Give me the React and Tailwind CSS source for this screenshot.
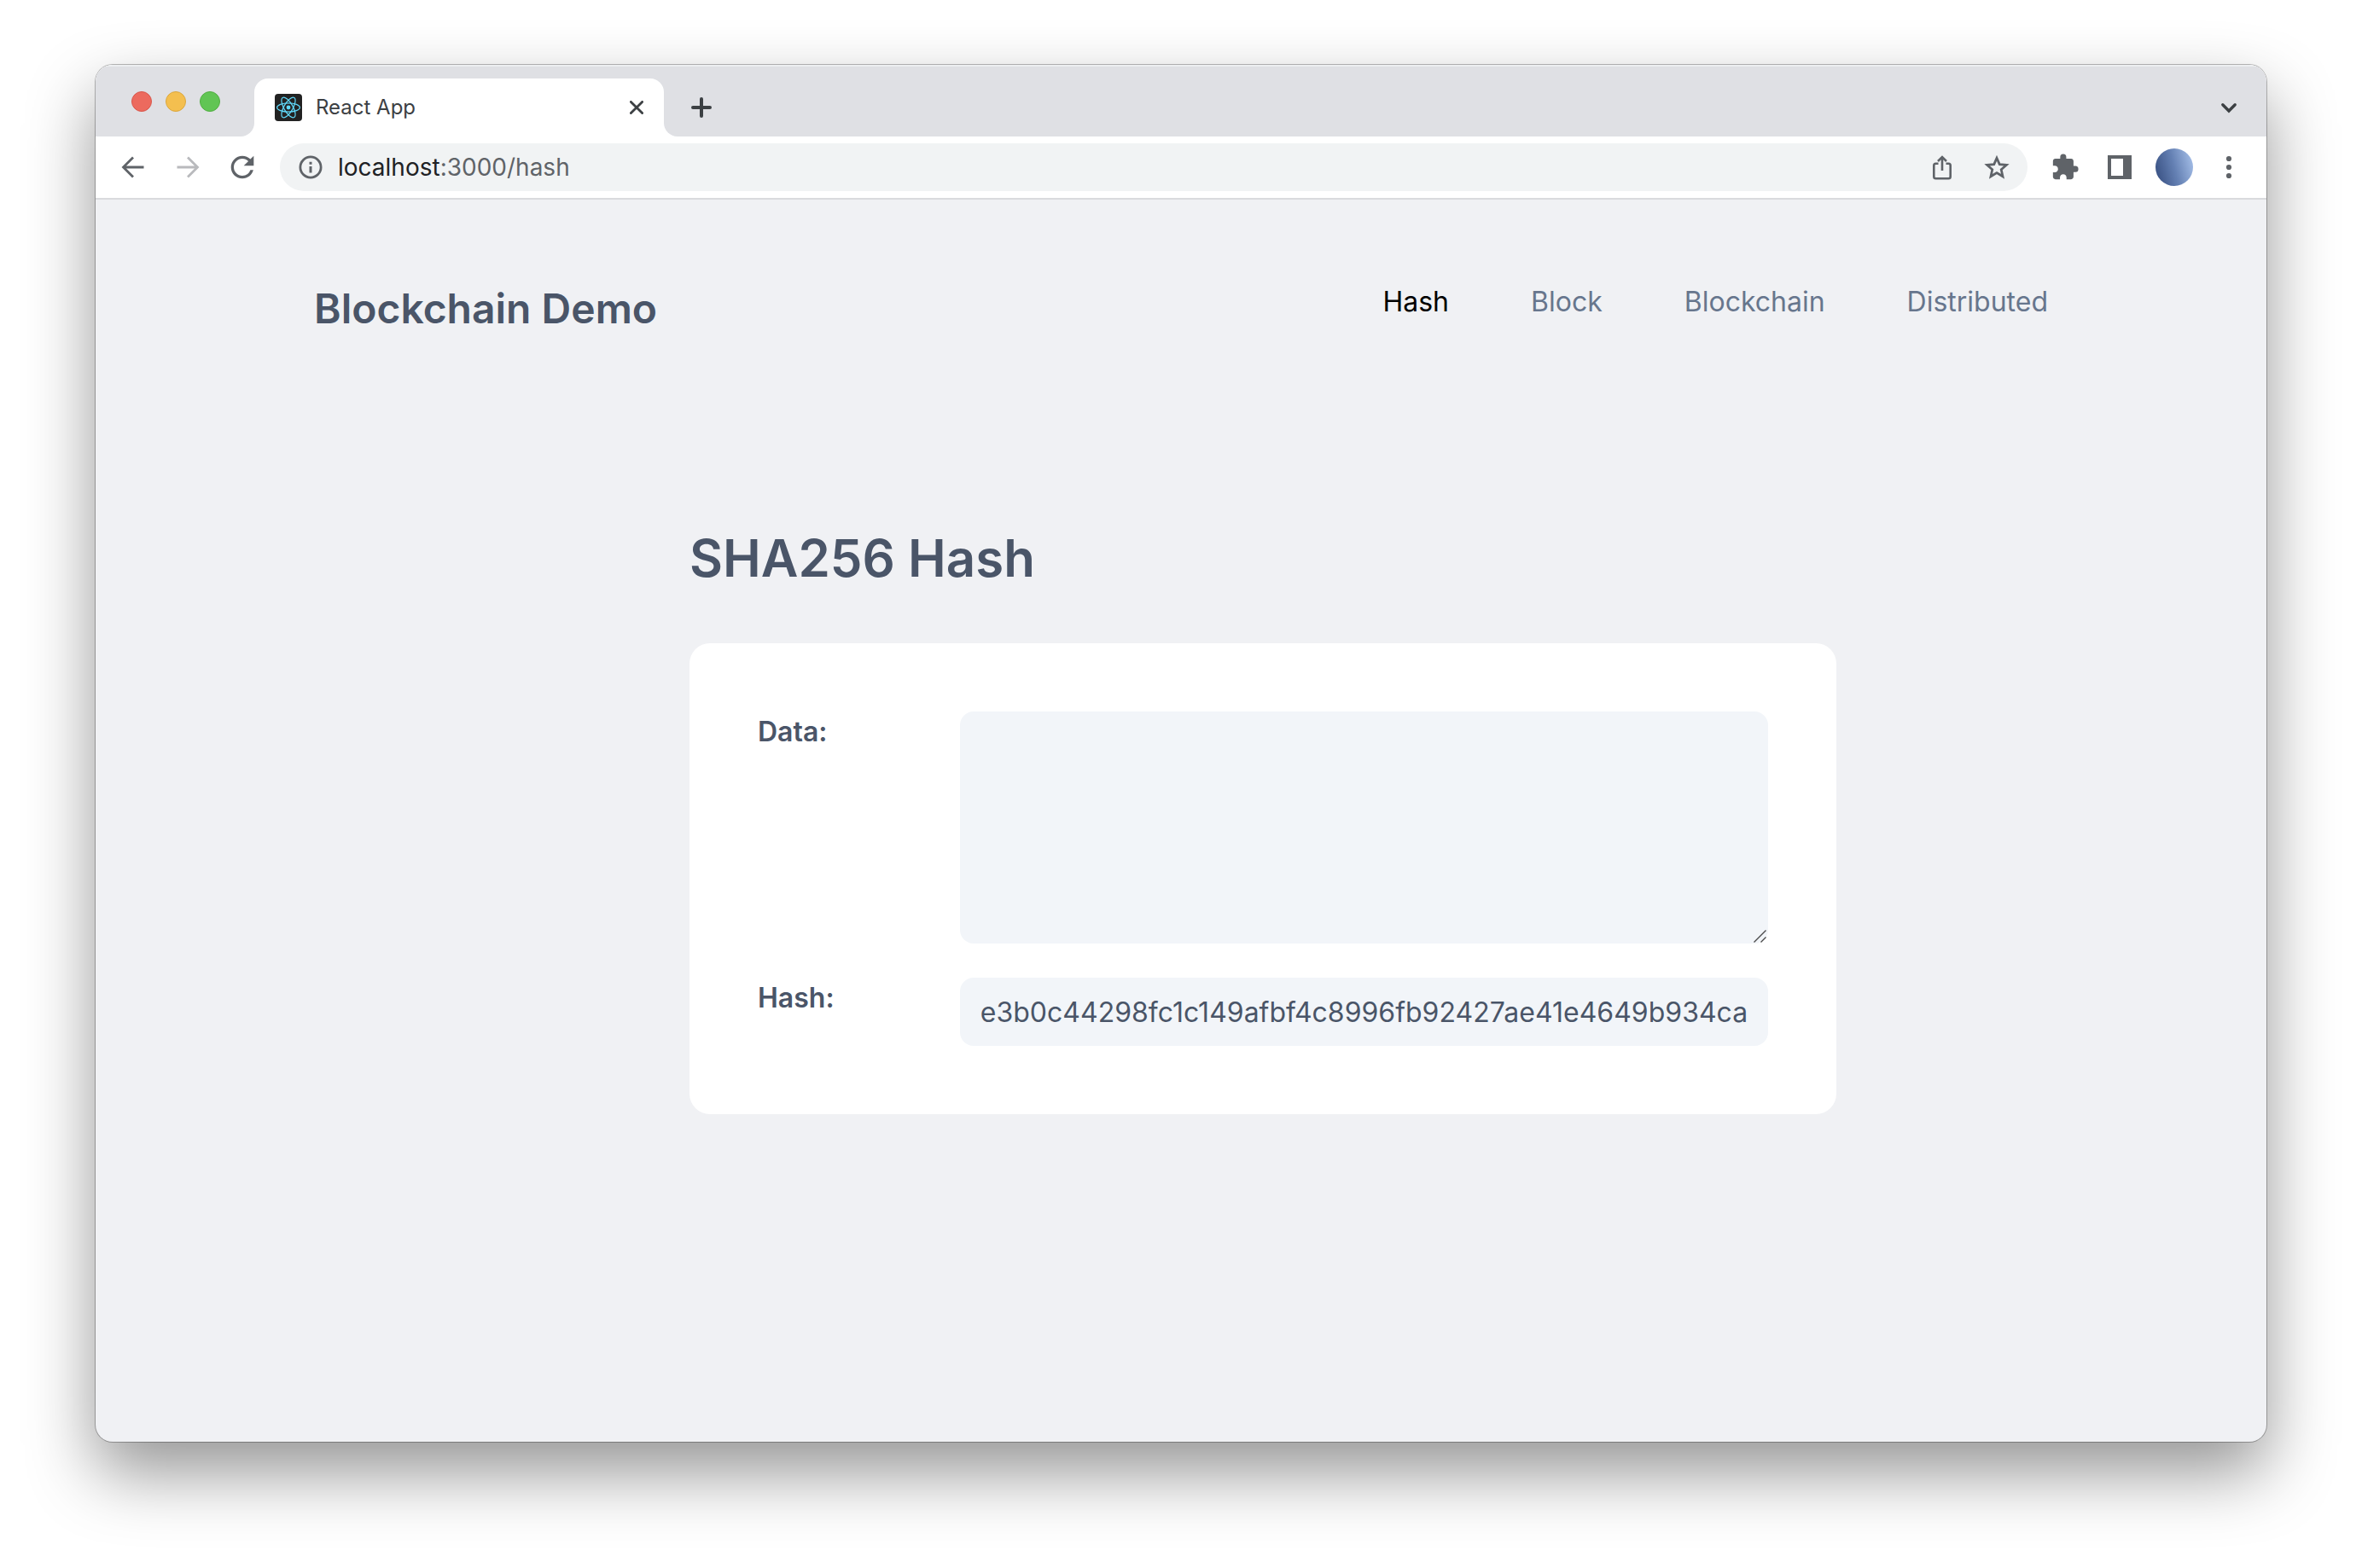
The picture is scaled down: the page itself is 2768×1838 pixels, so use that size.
import React from "react";
import { MdRefresh, MdExtension } from "react-icons/md";

const HASH = "e3b0c44298fc1c149afbf4c8996fb92427ae41e4649b934ca495991b7852b855";

const NAV = [
  { label: "Hash", href: "#hash", active: true },
  { label: "Block", href: "#block" },
  { label: "Blockchain", href: "#blockchain" },
  { label: "Distributed", href: "#distributed" },
];

function ArrowIcon({ className }) {
  return (
    <svg viewBox="-20 -20 40 40" className={className} fill="none" stroke="currentColor" strokeWidth="2.8" aria-hidden="true">
      <path d="M12.5 0H-11.5M0 -11.5L-11.5 0L0 11.5" />
    </svg>
  );
}

function InfoIcon() {
  return (
    <svg viewBox="-16 -16 32 32" className="size-8" fill="none" stroke="currentColor" strokeWidth="2.8" aria-hidden="true">
      <circle r="12.1" />
      <path d="M0 -6.2V-3.2M0 -1V6.4" strokeWidth="3" />
    </svg>
  );
}

function StarIcon() {
  return (
    <svg viewBox="-18 -19 36 36" className="size-10" fill="none" stroke="currentColor" strokeWidth="2.5" aria-hidden="true">
      <path d="M0 -10.7L2.9 -4L10.2 -3.3L4.7 1.5L6.3 8.7L0 4.9L-6.3 8.7L-4.7 1.5L-10.2 -3.3L-2.9 -4Z" />
    </svg>
  );
}

function ShareIcon() {
  return (
    <svg viewBox="-20 -20 40 40" className="size-10" fill="none" stroke="currentColor" strokeWidth="2.6" aria-hidden="true">
      <path d="M-4.5 -4.2H-7.5Q-9.7 -4.2 -9.7 -2V11Q-9.7 13.2 -7.5 13.2H7.5Q9.7 13.2 9.7 11V-2Q9.7 -4.2 7.5 -4.2H4.5" />
      <path d="M0 4V-11.5M-5 -7L0 -12L5 -7" />
    </svg>
  );
}

function SidePanelIcon() {
  return (
    <svg viewBox="0 0 28 28" className="size-7" aria-hidden="true">
      <path fill="currentColor" fillRule="evenodd" d="M0 0H28V28H0ZM4 4V24H18V4Z" />
    </svg>
  );
}

function ReactLogo() {
  return (
    <svg viewBox="-16 -16 32 32" className="size-8 shrink-0" aria-hidden="true">
      <rect x="-16" y="-16" width="32" height="32" rx="4" fill="#222222" />
      <circle r="2.4" fill="#61dafb" />
      <g fill="none" stroke="#61dafb" strokeWidth="1.2">
        <ellipse rx="13.4" ry="5.2" />
        <ellipse rx="13.4" ry="5.2" transform="rotate(60)" />
        <ellipse rx="13.4" ry="5.2" transform="rotate(120)" />
      </g>
    </svg>
  );
}

function IconButton({ label, className = "", children }) {
  return (
    <button type="button" aria-label={label} className={`flex w-16 items-center justify-center ${className}`}>
      {children}
    </button>
  );
}

function TabStrip() {
  return (
    <div className="flex h-[84px] border-t-2 border-[#eceef0] bg-white">
      <div className="flex w-[186px] gap-4 rounded-br-2xl bg-[#dfe0e4] pt-[29px] pl-[42px]">
        <button type="button" aria-label="Close window" className="size-6 rounded-full border border-[#d9574c] bg-[#ec6a5e]" />
        <button type="button" aria-label="Minimize window" className="size-6 rounded-full border border-[#dba73e] bg-[#f4bf4f]" />
        <button type="button" aria-label="Zoom window" className="size-6 rounded-full border border-[#52ad42] bg-[#61c554]" />
      </div>
      <div className="w-[480px] bg-[#dfe0e4] pt-[14px]">
        <div className="flex h-full items-center rounded-t-2xl bg-white pl-6">
          <ReactLogo />
          <span className="flex-1 pl-4 text-2xl text-[#3c4043]">React App</span>
          <button type="button" aria-label="Close tab" className="flex w-16 justify-center text-[#3c4043]">
            <svg viewBox="-8 -8 16 16" className="size-4" fill="none" stroke="currentColor" strokeWidth="2.8" strokeLinecap="round" aria-hidden="true">
              <path d="M-6.6 -6.6L6.6 6.6M6.6 -6.6L-6.6 6.6" />
            </svg>
          </button>
        </div>
      </div>
      <div className="flex flex-1 items-center justify-between rounded-bl-2xl bg-[#dfe0e4] px-3 pt-[14px] text-[#3c4043]">
        <IconButton label="New tab">
          <svg viewBox="-12 -12 24 24" className="size-6" fill="none" stroke="currentColor" strokeWidth="4" strokeLinecap="round" aria-hidden="true">
            <path d="M-10 0H10M0 -10V10" />
          </svg>
        </IconButton>
        <IconButton label="Search tabs">
          <svg viewBox="-12 -12 24 24" className="size-6" fill="none" stroke="currentColor" strokeWidth="3.4" strokeLinecap="round" aria-hidden="true">
            <path d="M-7.2 -3.2L0 4L7.2 -3.2" />
          </svg>
        </IconButton>
      </div>
    </div>
  );
}

function Toolbar() {
  return (
    <div className="flex border-b-2 border-[#d9dadd] bg-white px-3 py-2 text-[#5f6368]">
      <IconButton label="Back">
        <ArrowIcon className="size-10" />
      </IconButton>
      <IconButton label="Forward" className="text-[#b9babd]">
        <ArrowIcon className="size-10 rotate-180" />
      </IconButton>
      <IconButton label="Reload">
        <MdRefresh className="size-10" />
      </IconButton>
      <div className="ml-3 flex h-14 flex-1 items-center rounded-full bg-[#f1f3f4] pr-1 pl-5">
        <InfoIcon />
        <div className="flex-1 pl-4 text-[28px] leading-10 text-[#5f6368]">
          <span className="text-[#202124]">localhost</span>:3000/hash
        </div>
        <IconButton label="Share">
          <ShareIcon />
        </IconButton>
        <IconButton label="Bookmark this page">
          <StarIcon />
        </IconButton>
      </div>
      <div className="ml-3 flex">
        <IconButton label="Extensions">
          <MdExtension className="size-[34px]" />
        </IconButton>
        <IconButton label="Side panel">
          <SidePanelIcon />
        </IconButton>
        <IconButton label="Profile">
          <span className="size-11 rounded-full bg-[linear-gradient(75deg,#3b5385_8%,#6480b3_50%,#a0bae4_92%)]" />
        </IconButton>
        <IconButton label="Menu">
          <svg viewBox="-14 -14 28 28" className="size-7" fill="currentColor" aria-hidden="true">
            <circle cy="-10" r="3.1" />
            <circle r="3.1" />
            <circle cy="10" r="3.1" />
          </svg>
        </IconButton>
      </div>
    </div>
  );
}

function SiteHeader() {
  return (
    <header className="flex items-start justify-between px-64 pt-24">
      <div className="text-5xl leading-[64px] font-semibold">Blockchain Demo</div>
      <nav className="flex gap-24 text-[32px] leading-[48px]">
        {NAV.map((item) => (
          <a key={item.label} href={item.href} className={item.active ? "text-black" : "text-[#67768d]"}>
            {item.label}
          </a>
        ))}
      </nav>
    </header>
  );
}

function HashForm() {
  return (
    <main className="mt-56 pl-48">
      <div className="mx-auto max-w-[1344px]">
        <h1 className="text-6xl leading-[72px] font-semibold">SHA256 Hash</h1>
        <form className="mt-16 flex flex-col gap-10 rounded-3xl bg-white p-20 text-[32px] leading-[48px]">
          <div className="flex items-start">
            <label htmlFor="data" className="w-1/5 font-semibold">
              Data:
            </label>
            <div className="relative flex flex-1">
              <textarea id="data" className="h-[272px] w-full resize-none rounded-2xl bg-[#f2f5f9] px-6 py-4" />
              <svg viewBox="0 0 18 18" className="absolute right-0 bottom-0 size-[18px]" fill="none" stroke="#4a4a4a" strokeWidth="1.4" aria-hidden="true">
                <path d="M1.5 16.5L15.5 2.5M9.5 16.5L15.5 10.5" />
              </svg>
            </div>
          </div>
          <div className="flex items-start">
            <label htmlFor="hash" className="w-1/5 font-semibold">
              Hash:
            </label>
            <input id="hash" type="text" readOnly value={HASH} className="h-20 min-w-0 flex-1 rounded-2xl bg-[#f2f5f9] px-6" />
          </div>
        </form>
      </div>
    </main>
  );
}

export default function App() {
  return (
    <div className="flex min-h-screen bg-white px-28 pt-[76px] pb-[148px] font-['Inter',sans-serif]">
      <div className="flex flex-1 flex-col overflow-hidden rounded-[20px] bg-[#f0f1f4] shadow-[0_0_0_1px_rgba(0,0,0,0.27),0_36px_80px_rgba(0,0,0,0.42)]">
        <TabStrip />
        <Toolbar />
        <div className="flex-1 text-[#4a5568]">
          <SiteHeader />
          <HashForm />
        </div>
      </div>
    </div>
  );
}
